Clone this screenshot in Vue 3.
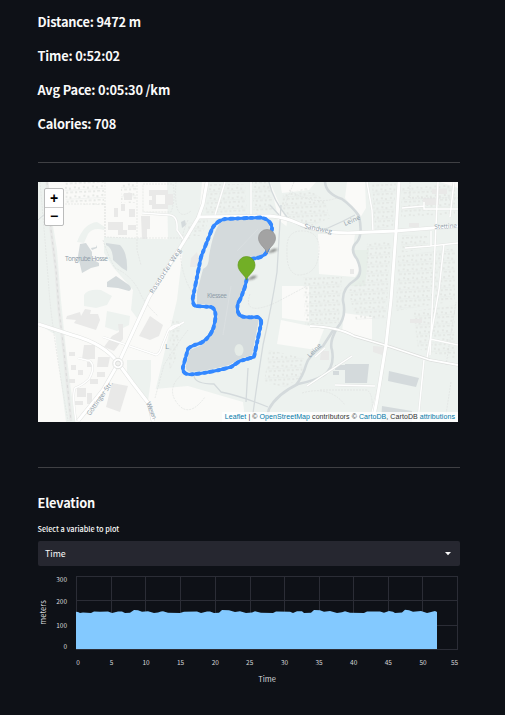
<script setup>
const stats = [
  'Distance: 9472 m',
  'Time: 0:52:02',
  'Avg Pace: 0:05:30 /km',
  'Calories: 708'
]

const xTicks = [
  [0, 78], [5, 111.5], [10, 146], [15, 180.5], [20, 215.3], [25, 249.7],
  [30, 284.5], [35, 319], [40, 353.7], [45, 388.3], [50, 423], [55, 454.5]
]
const gridX = [76.5, 111.5, 145.5, 180.5, 215.5, 250.5, 284.5, 319.5, 353.5, 388.5, 422.5, 457.5]
const yTicks = [[300, 581.5], [200, 603.5], [100, 627.5], [0, 648.5]]
const gridY = [576.5, 600.5, 625.5, 649.5]

const area = '76,649 76,611.8 78,612 80,613 83,612.4 91,613 94,611.6 100,611.8 108,611.5 112,613 118,611.4 122,611.6 125,613 130,612.7 134,610 138,610.2 142,611.8 148,611.3 154,613 158,612.6 161,611.6 163,611.2 168,612.8 180,613 184,611.7 197,611.4 201,613 207,611.5 210,611.4 214,613 219,612.7 222,610.1 229,610.2 235,612 240,611.2 246,613 252,612.6 255,611.2 261,612.8 273,613 276,611.6 290,611.8 293,613 297,611.3 302,611.3 304,613 311,612.7 314,610 320,610.2 324,611.8 330,611.1 337,613 342,612.3 345,611.2 350,612.7 364,613 367,611.6 380,611.5 384,612.8 389,611 393,611.8 395,613 402,612.4 405,609.8 409,610.2 413,611.7 421,611.1 427,613 433,611.5 435,611 437,612 437,649'

const track = 'M266 253 Q263 258 250 259 M246.500 280 Q245 288 243 292 Q241 299 238 303 Q236 313 241 316 Q246 318 257 317 Q262 318 261 324 L254 357 L240 361 L231 367 Q210 373 190 374.500 Q182 374 183 367 L188 349 Q190 346 201 343 Q213 336 215 321 Q217 309 211 307 L195 306 Q192 303 193 297 L201 257 L212 229 Q216 221 225 219 L260 217.500 Q271 219 272 228 L271 241 L266 253'
const lake = 'M225 220 L260 219 Q270 220 270 229 L269 241 L264 254 L248 259 L245 288 L239 301 Q236 316 246 318 L259 319 L252 355 L240 359 L229 365 Q207 371 190 372 Q185 371 186 365 L190 350 L202 345 Q216 335 217 316 Q217 307 211 305 L197 304 L197 292 L203 269 Q209 267 209 256 Q213 232 220 223 Z'

const greens = [
  'M38 182 H46 L57 250 L61 300 L66 350 L75 422 H66 L57 350 L51 300 L47 275 H38 Z',
  'M38 275 H51 L56 335 L38 324 Z',
  'M104 237 L190 240 L149 297 L137 318 L131 310 L133 290 L113 267 L104 253 Z',
  'M77 242 Q84 223 97 222 L105 227 L104 230 Q93 227 88 234 L84 243 Z',
  'M84 295 Q87 289 101 290 L112 296 L107 305 L96 308 L84 306 Z',
  'M107 311 L130 316 L129 325 L117 331 L105 327 Z',
  'M127 360 H151 V379 L148 401 L127 378 Z',
  'M167 182 H202 L199 215 L184 240 L168 240 Z',
  'M184 240 L199 218 L276 218 L295 233 V300 L275 422 H245 L243 405 L155 405 L155 392 L177 300 Z',
  'M208 182 H270 L278 217 H198 Z',
  'M309 182 H440 L458 188 V422 H269 L276 300 L287 222 L270 182 Z'
]
const clearings = [
  'M318 234 H355 L353 249 L360 270 L355 277 L319 274 Z',
  'M282 286 H309 V322 L282 318 Z',
  'M281 320 L324 329 L316 350 L277 344 Z',
  'M344 313 L372 317 L372 341 L342 332 Z',
  'M155 389 L188 386 L243 402 L245 421 H155 Z',
  'M280 182 L316 182 L309 190 L282 193 Z',
  'M347 182 L365 182 L366 208 L360 218 L345 198 Z',
  'M112 216 H136 V237 H110 Z',
  'M142 215 H167 V239 H142 Z'
]
const housing = [
  'M64 182 H104 V205 L66 204 Z',
  'M121 182 H136 V203 H121 Z',
  'M209 184 H245 L247 214 L205 215 Z',
  'M252 182 H269 L274 210 L254 214 Z',
  'M283 195 L306 188 L325 200 L330 218 L307 228 L289 217 L280 205 Z',
  'M372 184 L396 183 L393 226 L375 230 Z',
  'M402 185 H455 V214 L401 217 Z',
  'M402 235 L427 236 L429 248 L400 253 Z',
  'M367 242 L391 240 L386 318 L356 320 L348 290 L366 277 Z',
  'M398 256 L455 248 V301 L396 311 Z',
  'M269 350 L304 358 L302 377 L285 387 L264 383 Z',
  'M303 277 L342 277 L339 323 L305 325 Z',
  'M170 320 L181 322 L176 358 L169 372 Z',
  'M413 311 L455 305 V359 L418 349 Z',
  'M188 223 L196 222 L208 216 L208 224 L200 236 L187 236 Z'
]
const buildings = [
  'M149 190 H168 V194 H173 V205 H168 V209 H152 V205 H149 V200 H152 V196 H149 Z M156 195 H165 V204 H156 Z',
  'M114 208 h4 v9 h-4 z M124 193 h8 v7 h-8 z M121 204 h4 v7 h-4 z M129 209 h6 v8 h-6 z M108 222 h15 v8 h-15 z M128 225 h8 v5 h-8 z M118 230 h9 v5 h-9 z',
  'M141 216 h9 v13 h-3 v10 h-5 z M67 316 l13 -4 l1 4 l4 -7 l6 1 l-1 4 h8 l2 6 l-4 10 l-22 -7 l2 -3 l-10 -1 z',
  'M84 345 h11 v14 h-13 z M98 357 h12 l-2 10 h-11 z M112 336 l7 -4 l-1 -8 h5 v15 l-9 12 l-10 -4 z',
  'M150 316 l13 9 l-4 11 l-9 4 l-11 -4 z M112 383 l16 3 l-8 26 l-14 -5 z',
  'M69 352 h6 v4 h-6 z M71 365 h5 v5 h-5 z M78 370 h5 v5 h-5 z M87 362 h5 v5 h-5 z M97 372 h8 v5 h-8 z M90 379 h8 v5 h-8 z',
  'M77 388 h9 v9 h-9 z M87 393 h5 v11 h-5 z M75 401 h8 v4 h-8 z M69 379 h6 v4 h-6 z',
  'M191 258 l6 -6 l2 8 l-3 7 h-6 z M321 351 h8 v9 h-9 z M350 269 h4 v5 h-4 z M373 346 l12 1 l-3 8 l-9 -3 z',
  'M423 198 h16 v7 h-16 z M409 223 h10 v4 h-10 z M410 319 h12 v4 h-12 z M432 189 h15 v5 h-15 z'
]
const water = [
  'M80 244 L86 243 L92 252 L92 259 L99 263 L99 266 L91 268 L82 273 L78 256 Z',
  'M91 248 l5 -1 l1 -2 v3 l-5 2 z',
  'M106 243 L120 245 Q128 253 127 271 L122 268 L113 260 Q113 248 106 245 Z',
  'M107 282 L116 276 L129 285 Q133 289 129 291 L118 288 L107 287 Z',
  'M345 364 L369 364 L367 383 L345 383 Z',
  'M335 365 H346 V370 H335 Z M333 371 H339 V375 H333 Z',
  'M389 371 L419 378 L416 387 L388 381 Z',
  'M382 406 L412 411 V422 H381 Z',
  'M181 222 l4 -2 l1 5 l-4 3 z'
]
const paths = [
  'M40 182 Q46 250 49 290 T68 421',
  'M65 204 H105 V237 L130 238 H190 M105 182 V237 M137 182 V250 L141 265',
  'M103 240 Q108 256 115 268 Q133 276 141 295 Q146 305 158 316',
  'M143 184 h30 q3 15 -2 28 h-28 z',
  'M188 330 Q176 345 164 365 L155 398',
  'M188 220 Q170 260 196 299',
  'M250 294 Q242 317 275 303 L307 286',
  'M185 372 Q165 387 177 403 T205 397',
  'M287 250 Q286 232 300 231 Q320 230 319 251 Q318 275 298 275 Q286 273 287 250 Z',
  'M320 390 L367 390 Q375 395 371 421 M410 182 V198 H458',
  'M302 393 Q330 385 345 405 M446 365 L456 302 M451 382 L445 421',
  'M176 182 Q173 225 191 211 M294 182 L284 207 M289 190 Q315 207 340 197'
]
const minorRoads = [
  'M76 421 Q72 396 75 388 Q83 385 89 379 Q96 367 90 361 L78 358',
  'M103 337 L156 355 Q160 354 162 346 L168 331 Q173 324 180 325',
  'M142 213 L170 215 Q178 216 177 230 L184 240',
  'M225 182 L215 215 M251 182 V217',
  'M367 182 L372 210 L373 232',
  'M454 182 L450 217 M424 202 V209 H458 M402 208 L424 206',
  'M431 231 V246 L458 243 M405 248 L431 246 M444 244 L439 290 L427 358',
  'M438 182 L430 355 M430 339 L458 345',
  'M383 370 L370 421 M335 385 L375 386',
  'M170 330 L184 322 M307 386 L352 356',
  'M424 360 L418 421 M315 357 L325 348'
]
const majorRoads = [
  'M207 182 L203 204 L198 218 L183 243 L149 297 L119 362 L103 390 L78 421',
  'M38 324 L72 335 Q105 344 118 363 L132 382 L149 404 L153 421',
  'M198 217 L270 216 Q285 217 300 224 Q320 233 348 233 L395 231 L458 226',
  'M399 182 L396 232 L391 300 L386 345 L377 400 L373 421'
]
const eastRoad = 'M310 326 Q338 327 354 336 L391 347 L430 360 L458 365'
const rivers = [
  'M325 182 Q326 194 342 199 Q353 207 359 216 Q363 235 357 242 Q349 249 357 259 Q364 274 355 280 Q342 288 343 301 Q347 317 337 328 Q329 342 332 350 Q335 367 324 375 Q314 381 298 384 Q277 394 269 409 L266 421',
  'M296 385 Q303 376 306 365 Q309 355 323 346 L334 329'
]
const canals = [
  'M269 182 Q273 200 287 217 Q308 235 328 228 Q342 222 355 215',
  'M281 205 Q279 240 277 272 Q272 305 263 345 Q256 390 252 421',
  'M194 376 Q195 384 214 384 L221 392 Q241 396 268 407',
  'M248 368 L246 402 M279 215 L270 205'
]
</script>

<template>
  <main class="page">
    <section class="stats">
      <h3 v-for="stat in stats" :key="stat">{{ stat }}</h3>
    </section>
    <hr />
    <section class="map">
      <svg class="tiles" viewBox="38 182 420 240" width="420" height="240">
        <defs>
          <pattern id="houses" width="9" height="9" patternUnits="userSpaceOnUse" patternTransform="rotate(-3)">
            <path d="M1 1h2v2h-2z M5 2h2v2h-2z M2 6h2v2h-2z M6 6h3v1.500h-3z" fill="#e1e4e1" />
            <path d="M0 4.700h9" stroke="#e4e8e5" stroke-width="0.7" />
          </pattern>
          <filter id="shade" x="-50%" y="-50%" width="200%" height="200%"><feGaussianBlur stdDeviation="1" /></filter>
        </defs>
        <rect x="38" y="182" width="420" height="240" fill="#fafaf8" />
        <g fill="#edf2ef"><path v-for="d in greens" :key="d" :d="d" /></g>
        <path d="M352 250h17l-4 36h-17l10-12z" fill="#e7efe9" />
        <g fill="#fafaf8"><path v-for="d in clearings" :key="d" :d="d" /></g>
        <g fill="url(#houses)" opacity=".75"><path v-for="d in housing" :key="d" :d="d" /></g>
        <g fill="#e9e9e8" fill-rule="evenodd"><path v-for="d in buildings" :key="d" :d="d" /></g>
        <g fill="#d4dadc"><path v-for="d in water" :key="d" :d="d" /></g>
        <g class="line" stroke="#e0e3e1" stroke-width="0.7" stroke-dasharray="2 1"><path v-for="d in paths" :key="d" :d="d" /></g>
        <g class="line" stroke="#d4dadc" stroke-width="2.600"><path v-for="d in rivers" :key="d" :d="d" /></g>
        <g class="line" stroke="#d4dadc" stroke-width="1.3"><path v-for="d in canals" :key="d" :d="d" /></g>
        <path :d="lake" fill="#d4dadc" />
        <ellipse cx="239" cy="350" rx="4.500" ry="6" fill="#e5ebe7" />
        <path d="M258 229L237 251M231 286L223 335" class="line" stroke="#dce1e2" stroke-width="0.7" />
        <path d="M47 182L51 230L56 270L59 310L64 352L71 421" class="line" stroke="#e9eae9" stroke-width="3" />
        <path d="M47 182L51 230L56 270L59 310L64 352L71 421" class="line" stroke="#d9dbda" stroke-width="1" stroke-dasharray="3 3" />
        <path d="M38 220L46 213" class="line" stroke="#d4dadc" />
        <g class="line" stroke="#e3e5e3" stroke-width="2.300"><path v-for="d in minorRoads" :key="d" :d="d" /></g>
        <g class="line" stroke="#fff" stroke-width="1.500"><path v-for="d in minorRoads" :key="d" :d="d" /></g>
        <g class="line" stroke="#e1e3e1" stroke-width="4"><path v-for="d in majorRoads" :key="d" :d="d" /></g>
        <path :d="eastRoad" class="line" stroke="#dddfdd" stroke-width="3" />
        <path :d="eastRoad" class="line" stroke="#fff" stroke-width="1.800" />
        <g class="line" stroke="#fff" stroke-width="3"><path v-for="d in majorRoads" :key="d" :d="d" /></g>
        <circle cx="118" cy="363.500" r="5.200" fill="#fff" stroke="#e1e3e1" />
        <circle cx="118" cy="363.500" r="2.500" fill="#f0f1ef" stroke="#dedfde" />
        <g class="labels">
          <text x="65" y="261" textLength="43">Tongrube Hosse</text>
          <text x="207" y="298" textLength="20">Kiessee</text>
          <text transform="translate(153 294) rotate(-57)" textLength="52">Rosdorfer Weg</text>
          <text transform="translate(90 416) rotate(-55)" textLength="40">Göttinger Str.</text>
          <text transform="translate(146 403) rotate(68)" textLength="18">Wiesen</text>
          <text transform="translate(304 228) rotate(12)" textLength="28">Sandweg</text>
          <text transform="translate(345 226) rotate(-24)" textLength="17">Leine</text>
          <text transform="translate(310 358) rotate(-46)" textLength="17">Leine</text>
          <text transform="translate(434.500 229) rotate(-3)" textLength="22.500" lengthAdjust="spacingAndGlyphs">Stettine</text>
          <text x="165" y="349" class="big">L</text>
        </g>
        <path :d="track" class="line" stroke="#3388ff" stroke-width="3" stroke-linecap="round" />
        <path :d="track" class="line" stroke="#3388ff" stroke-width="3.900" stroke-linecap="round" stroke-dasharray="1.500 5 3 4" />
        <g v-for="m in [[267, 253, '#a3a3a3', '#949494'], [246.5, 280, '#72af26', '#639a20']]" :key="m[0]" :transform="`translate(${m[0]} ${m[1]})`">
          <path d="M0 0L6-4Q12-5 10-3Q7 0 0 0Z" fill="#222" opacity=".5" filter="url(#shade)" />
          <path d="M0 0C-1-5-8.500-8-8.500-15A8.500 8.500 0 0 1 8.500-15C8.500-8 1-5 0 0Z" :fill="m[2]" :stroke="m[3]" stroke-width=".7" />
        </g>
      </svg>
      <div class="zoom"><button>+</button><button>−</button></div>
      <div class="credits"><a>Leaflet</a> | © <a>OpenStreetMap</a> contributors © <a>CartoDB</a>, CartoDB <a>attributions</a></div>
    </section>
    <hr class="second" />
    <h3 class="title">Elevation</h3>
    <label>Select a variable to plot</label>
    <div class="select">
      <span>Time</span>
      <svg width="6" height="4" viewBox="0 0 6 4"><path d="M0 0H6L3 3.200Z" fill="#fafafa" /></svg>
    </div>
    <svg class="chart" viewBox="30 566 430 130" width="430" height="130">
      <g stroke="#2b2d36" stroke-width="1" shape-rendering="crispEdges">
        <line v-for="x in gridX" :key="x" :x1="x" :x2="x" y1="576" y2="649" />
        <line v-for="y in gridY" :key="y" :y1="y" :y2="y" x1="76" x2="458" />
      </g>
      <polygon :points="area" fill="#83c9ff" />
      <g class="ticks">
        <text v-for="t in yTicks" :key="t[0]" x="67" :y="t[1]" text-anchor="end">{{ t[0] }}</text>
        <text v-for="t in xTicks" :key="t[0]" :x="t[1]" y="664.500" text-anchor="middle">{{ t[0] }}</text>
      </g>
      <g class="axis" text-anchor="middle">
        <text x="267" y="682">Time</text>
        <text transform="translate(45.500 612.500) rotate(-90)">meters</text>
      </g>
    </svg>
  </main>
</template>

<style>
body { background: #0e1117; }
</style>

<style scoped>
.page {
  box-sizing: border-box;
  width: 505px;
  height: 715px;
  padding: 5px 45px 0 38px;
  overflow: hidden;
  background: #0e1117;
  color: #fafafa;
  font-family: "Noto Sans CJK SC", "Noto Sans", sans-serif;
}
h3 {
  margin: 0 0 0 -.5px;
  height: 34px;
  line-height: 34px;
  font-size: 12.8px;
  font-weight: 600;
  letter-spacing: -.18px;
  white-space: nowrap;
}
hr { height: 1px; margin: 21px 0 19px; border: 0; background: #3f4044; }
.map { position: relative; width: 420px; height: 240px; overflow: hidden; }
.tiles { display: block; }
.line { fill: none; }
.labels {
  fill: #8d9ba8;
  font: 6.5px "Open Sans", sans-serif;
}
.labels .big { font-size: 8px; }
.zoom {
  position: absolute;
  top: 6px;
  left: 6px;
  display: flex;
  flex-direction: column;
  width: 18px;
  height: 36px;
  border: 1px solid #bbbcbc;
  border-radius: 2px;
  background: #fff;
}
.zoom button {
  flex: 1;
  padding: 0;
  border: 0;
  background: none;
  color: #000;
  font: bold 14px/16px "Liberation Sans", sans-serif;
}
.zoom button + button { border-top: 1px solid #ccc; }
.credits {
  position: absolute;
  right: 0;
  bottom: 0;
  padding: 0 3px;
  background: rgba(255, 255, 255, .8);
  color: #333;
  font: 7px/10px "Liberation Sans", sans-serif;
  letter-spacing: .08px;
  white-space: nowrap;
}
.credits a { color: #0078a8; }
.second { margin: 45px 0 18px; }
.title { height: 34px; }
label {
  display: block;
  height: 21px;
  margin-left: -.5px;
  line-height: 18px;
  font-size: 7.3px;
  font-weight: 500;
}
.select {
  display: flex;
  align-items: center;
  justify-content: space-between;
  box-sizing: border-box;
  height: 25px;
  padding: 0 9px 0 7px;
  border-radius: 2px;
  background: #262730;
  font-size: 8.8px;
}
.select span { line-height: 13px; padding-bottom: 1px; }
.chart { display: block; margin-left: -8px; }
.ticks { fill: #d8d9dc; font-size: 6.5px; }
.axis { fill: #d8d9dc; font-size: 7.5px; }
</style>
